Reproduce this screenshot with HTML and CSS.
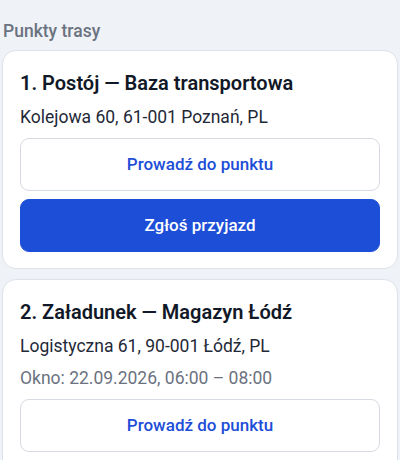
FILE: index.html
```html
<!DOCTYPE html>
<html lang="pl">

<head>
    <meta charset="UTF-8">
    <meta name="viewport" content="width=device-width, initial-scale=1.0">
    <title>Punkty trasy</title>
    <link rel="stylesheet" href="styles.css">
</head>

<body>
    <h2 class="section-title">Punkty trasy</h2>
    <div class="stops">
        <div class="stop-card">
            <h3 class="stop-name">1. Postój — Baza transportowa</h3>
            <p class="stop-address">Kolejowa 60, 61-001 Poznań, PL</p>
            <div class="stop-actions">
                <button class="btn btn-outline">Prowadź do punktu</button>
                <button class="btn btn-primary">Zgłoś przyjazd</button>
            </div>
        </div>
        <div class="stop-card">
            <h3 class="stop-name">2. Załadunek — Magazyn Łódź</h3>
            <p class="stop-address">Logistyczna 61, 90-001 Łódź, PL</p>
            <p class="stop-window">Okno: 22.09.2026, 06:00 – 08:00</p>
            <div class="stop-actions">
                <button class="btn btn-outline">Prowadź do punktu</button>
                <button class="btn btn-primary">Zgłoś przyjazd</button>
            </div>
        </div>
    </div>
</body>
</html>
```

FILE: styles.css
```css
body {
    margin: 0;
    padding: 19px 2px 0;
    background-color: #eff2f7;
    font-family: Roboto, "Liberation Sans", Arial, sans-serif;
    color: #111827;
}

.section-title {
    margin: 0 0 7px 1px;
    font-size: 17.5px;
    line-height: 24px;
    font-weight: 500;
    color: #6b7280;
}

.stops {
    display: flex;
    flex-direction: column;
    gap: 10px;
}

.stop-card {
    display: flex;
    flex-direction: column;
    gap: 8px;
    background-color: #fff;
    border: 1px solid #dde2ea;
    border-radius: 14px;
    padding: 18px 17px 16px;
}

.stop-name {
    margin: 0;
    font-size: 20px;
    line-height: 28px;
    font-weight: 600;
    color: #111827;
}

.stop-address,
.stop-window {
    margin: 0;
    font-size: 17.5px;
    line-height: 24px;
    color: #1f2937;
}

.stop-window {
    color: #6b7280;
}

.stop-actions {
    display: flex;
    flex-direction: column;
    gap: 8px;
    margin-top: 1px;
}

.btn {
    display: block;
    width: 100%;
    padding: 13px 16px;
    border-radius: 9px;
    font-family: inherit;
    font-size: 17px;
    line-height: 25px;
    font-weight: 500;
    text-align: center;
    cursor: pointer;
}

.btn-outline {
    background-color: #fff;
    border: 1px solid #d6dae1;
    color: #1d4ed8;
}

.btn-primary {
    background-color: #1d4ed8;
    border: 1px solid #1d4ed8;
    color: #fff;
}
```
